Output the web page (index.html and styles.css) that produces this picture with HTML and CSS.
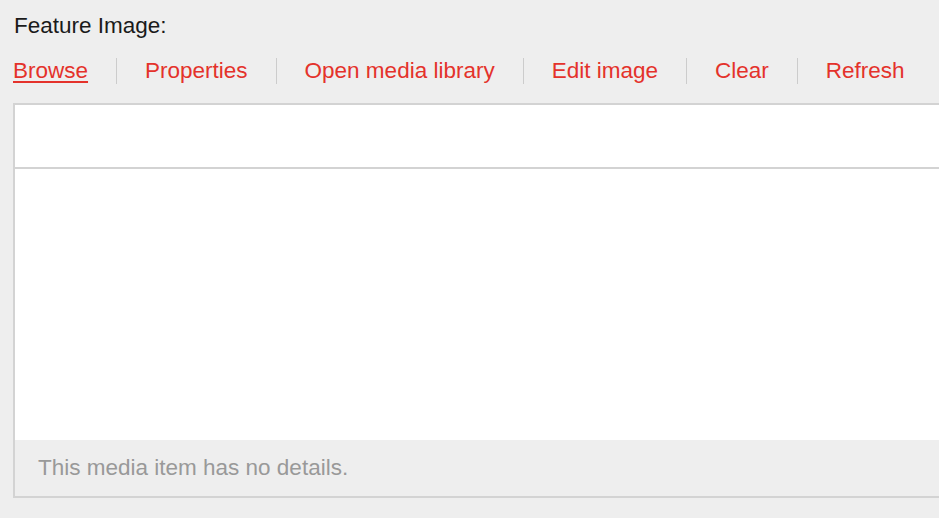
FILE: index.html
```html
<!DOCTYPE html>
<html>
<head>
<meta charset="utf-8">
<link rel="stylesheet" href="styles.css">
</head>
<body>
<div class="field">
  <div class="label">Feature Image:</div>
  <div class="actions">
    <a class="action current" href="#">Browse</a>
    <span class="sep"></span>
    <a class="action" href="#">Properties</a>
    <span class="sep"></span>
    <a class="action" href="#">Open media library</a>
    <span class="sep"></span>
    <a class="action" href="#">Edit image</a>
    <span class="sep"></span>
    <a class="action" href="#">Clear</a>
    <span class="sep"></span>
    <a class="action" href="#">Refresh</a>
  </div>
  <div class="media">
    <div class="media-head"></div>
    <div class="media-body"></div>
    <div class="media-foot">This media item has no details.</div>
  </div>
</div>
</body>
</html>
```
FILE: styles.css
```css
html, body {
  margin: 0;
  padding: 0;
  background: #eeeeee;
  font-family: "Liberation Sans", Arial, sans-serif;
  font-size: 22.5px;
  overflow: hidden;
}
.field {
  padding: 13px 0 0 13px;
  overflow: hidden;
}
.label {
  color: #1a1a1a;
  line-height: 26px;
  padding-left: 1px;
}
.actions {
  display: flex;
  align-items: center;
  margin-top: 19px;
  height: 26px;
}
.action {
  color: #e4322b;
  text-decoration: none;
  line-height: 26px;
  white-space: nowrap;
}
.action.current {
  text-decoration: underline;
  text-underline-offset: 3px;
}
.sep {
  width: 1px;
  height: 26px;
  background: #cccccc;
  margin: 0 28px;
}
.media {
  margin-top: 19px;
  margin-right: -4px;
  border: 2px solid #d3d3d3;
  background: #ffffff;
}
.media-head {
  height: 62px;
  border-bottom: 2px solid #d3d3d3;
}
.media-body {
  height: 271px;
}
.media-foot {
  background: #eeeeee;
  height: 56px;
  line-height: 56px;
  padding-left: 23px;
  color: #999999;
}
```
